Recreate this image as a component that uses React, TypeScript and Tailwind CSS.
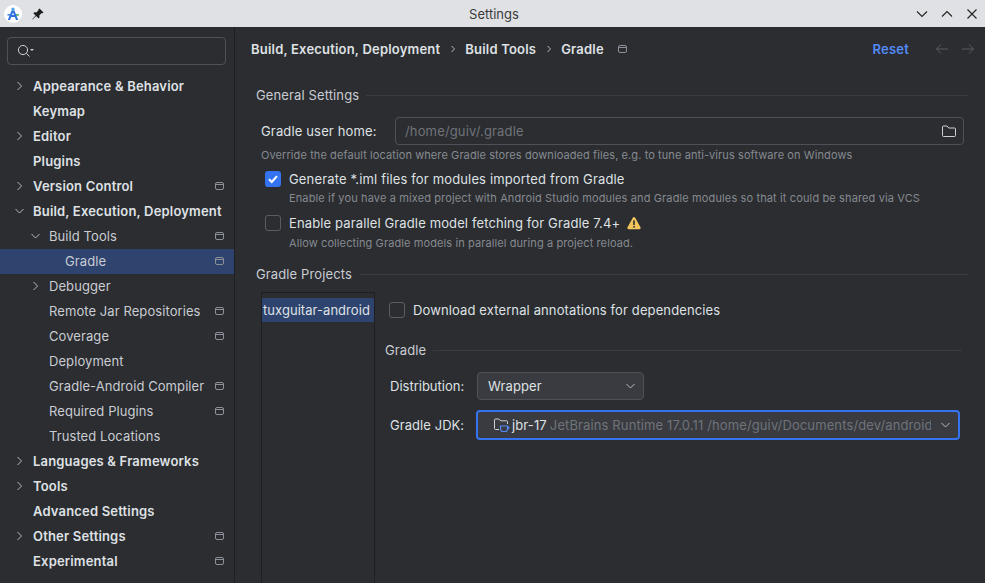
import React from "react";

const Chevron = ({ open = false }: { open?: boolean }) => (
  <svg width="10" height="10" viewBox="0 0 10 10" fill="none" stroke="#b4b8bf" strokeWidth="1" className="shrink-0">
    {open ? <path d="M1.5 3l4 4 4-4" /> : <path d="M3.5 1l4 4-4 4" />}
  </svg>
);

const ProjectIcon = () => (
  <svg width="10" height="10" viewBox="0 0 10 10" fill="none" stroke="#8c9098" strokeWidth="1" className="shrink-0">
    <rect x="1.5" y="1.5" width="8" height="7" rx="1.5" />
    <path d="M1.5 3.5h8" />
  </svg>
);

type Row = { label: string; depth: 0 | 1 | 2; arrow?: "open" | "closed"; icon?: boolean; bold?: boolean; selected?: boolean };

const rows: Row[] = [
  { label: "Appearance & Behavior", depth: 0, arrow: "closed", bold: true },
  { label: "Keymap", depth: 0, bold: true },
  { label: "Editor", depth: 0, arrow: "closed", bold: true },
  { label: "Plugins", depth: 0, bold: true },
  { label: "Version Control", depth: 0, arrow: "closed", bold: true, icon: true },
  { label: "Build, Execution, Deployment", depth: 0, arrow: "open", bold: true },
  { label: "Build Tools", depth: 1, arrow: "open", icon: true },
  { label: "Gradle", depth: 2, icon: true, selected: true },
  { label: "Debugger", depth: 1, arrow: "closed" },
  { label: "Remote Jar Repositories", depth: 1, icon: true },
  { label: "Coverage", depth: 1, icon: true },
  { label: "Deployment", depth: 1 },
  { label: "Gradle-Android Compiler", depth: 1, icon: true },
  { label: "Required Plugins", depth: 1, icon: true },
  { label: "Trusted Locations", depth: 1 },
  { label: "Languages & Frameworks", depth: 0, arrow: "closed", bold: true },
  { label: "Tools", depth: 0, arrow: "closed", bold: true },
  { label: "Advanced Settings", depth: 0, bold: true },
  { label: "Other Settings", depth: 0, arrow: "closed", bold: true, icon: true },
  { label: "Experimental", depth: 0, bold: true, icon: true },
];

const TreeRow = ({ r }: { r: Row }) => (
  <div className={`flex h-[25px] items-center pr-[10px] pb-[2px] ${r.selected ? "bg-[#2e436e]" : ""}`}>
    <div className={`flex shrink-0 items-center justify-end pr-[9px] ${r.depth === 0 ? "w-[33px]" : ""} ${r.depth === 1 ? "w-[49px]" : ""} ${r.depth === 2 ? "w-[65px]" : ""}`}>
      {r.arrow && <Chevron open={r.arrow === "open"} />}
    </div>
    <span className={`flex-1 whitespace-nowrap ${r.bold ? "font-semibold tracking-[0.18px] text-[#dfe1e5]" : "tracking-[0.08px] text-[#c9ccd3]"}`}>{r.label}</span>
    {r.icon && <ProjectIcon />}
  </div>
);

const Section = ({ title, className = "" }: { title: string; className?: string }) => (
  <div className={`flex items-center gap-[7px] ${className}`}>
    <span className="whitespace-nowrap tracking-[0.12px] text-[#c9ccd3]">{title}</span>
    <div className="h-px flex-1 bg-[#393b40]" />
  </div>
);

const Check = ({ on = false }: { on?: boolean }) =>
  on ? (
    <div className="flex size-4 shrink-0 items-center justify-center rounded-[3px] bg-[#3574f0]">
      <svg width="12" height="12" viewBox="0 0 12 12" fill="none" stroke="#ffffff" strokeWidth="2">
        <path d="M2 6.2l2.8 2.8L10 3.2" />
      </svg>
    </div>
  ) : (
    <div className="size-4 shrink-0 rounded-[3px] border border-[#5a5d63]" />
  );

export default function App() {
  return (
    <div className="flex h-[583px] w-[985px] flex-col overflow-hidden bg-[#2b2d30] font-['Inter',sans-serif] text-[13px] leading-[16px] text-[#dfe1e5]">
      <header className="flex h-[27px] shrink-0 items-center bg-[#dfe1e5] pl-1 pr-[7px]">
        <div className="flex flex-1 items-center">
          <div className="flex size-[18px] items-center justify-center rounded-full bg-white">
            <svg width="14" height="14" viewBox="0 0 14 14">
              <path d="M5.6 3.5L1.8 13h2.2l1.2-3h3.6l1.2 3h2.2L8.4 3.5zM6 8l1-2.6L8 8z" fill="#2f6fe0" />
              <rect x="5.4" y="0.5" width="3.2" height="3.4" rx="1.6" fill="#4aa3e8" />
              <rect x="1.5" y="7" width="2.6" height="1.6" fill="#3f86e6" />
              <rect x="10" y="7" width="2.8" height="1.8" fill="#58b368" />
            </svg>
          </div>
          <svg width="14" height="14" viewBox="0 0 14 14" className="ml-[9px]" fill="#1c1c1c">
            <path d="M8.5 1.5l4 4-1 .8-.8-.3-2.4 2.4.2 2-1 1-2.3-2.3L1.5 12.5l-.3-.3 3.4-3.6L2.3 6.3l1-1 2 .2L7.7 3l-.2-.8z" />
          </svg>
        </div>
        <div className="ml-[6px] text-[#3b3b3b]">Settings</div>
        <div className="flex flex-1 items-center justify-end gap-[13px]">
          <svg width="12" height="12" viewBox="0 0 12 12" fill="none" stroke="#222" strokeWidth="1.1"><path d="M1 3.5l5 5 5-5" /></svg>
          <svg width="12" height="12" viewBox="0 0 12 12" fill="none" stroke="#222" strokeWidth="1.1"><path d="M1 8.5l5-5 5 5" /></svg>
          <svg width="12" height="12" viewBox="0 0 12 12" fill="none" stroke="#222" strokeWidth="1.1"><path d="M1.5 1.5l9 9M10.5 1.5l-9 9" /></svg>
        </div>
      </header>

      <div className="flex min-h-0 flex-1">
        <aside className="w-[235px] shrink-0 border-r border-[#1e1f22]">
          <div className="mt-[10px] mr-[8px] mb-[9px] ml-[7px] flex h-[28px] items-center rounded-[4px] border border-[#4e5157] pl-[9px]">
            <svg width="18" height="14" viewBox="0 0 18 14" fill="none" stroke="#ced0d6" strokeWidth="1">
              <circle cx="6" cy="6" r="4.6" />
              <path d="M9.5 9.5l3 3" />
              <path d="M13 5h4l-2 2z" fill="#ced0d6" stroke="none" />
            </svg>
          </div>
          {rows.map((r) => (
            <TreeRow key={r.label} r={r} />
          ))}
        </aside>

        <main className="flex min-w-0 flex-1 flex-col">
          <div className="flex h-[44px] shrink-0 items-center pl-4 pr-[10px]">
            <div className="flex items-center font-semibold tracking-[0.2px] text-[#dfe1e5]">
              <span>Build, Execution, Deployment</span>
              <svg width="8" height="8" viewBox="0 0 8 8" fill="none" stroke="#b4b8bf" className="mr-[8px] ml-[9px]"><path d="M2.5 1l3 3-3 3" /></svg>
              <span>Build Tools</span>
              <svg width="8" height="8" viewBox="0 0 8 8" fill="none" stroke="#b4b8bf" className="mr-[8px] ml-[9px]"><path d="M2.5 1l3 3-3 3" /></svg>
              <span>Gradle</span>
              <div className="ml-[13px]"><ProjectIcon /></div>
            </div>
            <span className="ml-auto font-semibold tracking-[0.2px] text-[#548af7]">Reset</span>
            <svg width="14" height="12" viewBox="0 0 14 12" fill="none" stroke="#5a5d63" className="ml-[26px]"><path d="M13 6H1.5M6 1.5L1.5 6 6 10.5" /></svg>
            <svg width="14" height="12" viewBox="0 0 14 12" fill="none" stroke="#5a5d63" className="ml-3"><path d="M1 6h11.5M8 1.5L12.5 6 8 10.5" /></svg>
          </div>

          <div className="flex min-h-0 flex-1 flex-col pl-[21px] pr-[17px]">
            <Section title="General Settings" className="mt-[16px]" />

            <div className="mt-[14px] mr-[4px] flex items-center pl-[5px]">
              <span className="w-[134px] shrink-0 tracking-[0.15px] text-[#dfe1e5]">Gradle user home:</span>
              <div className="flex h-[28px] flex-1 items-center justify-between rounded-[4px] border border-[#4e5157] pl-[9px] pr-[6px] tracking-[0.15px] text-[#6f737a]">
                <span>/home/guiv/.gradle</span>
                <svg width="16" height="14" viewBox="0 0 16 14" fill="none" stroke="#ced0d6">
                  <path d="M1.5 11V3a1 1 0 011-1h3.6l1.6 2h5.8a1 1 0 011 1v6.5a1 1 0 01-1 1h-11a1 1 0 01-1-1z" />
                </svg>
              </div>
            </div>
            <p className="mt-[3px] pl-[5px] text-[11px] leading-[14px] tracking-[0.09px] whitespace-nowrap text-[#868a91]">
              Override the default location where Gradle stores downloaded files, e.g. to tune anti-virus software on Windows
            </p>

            <div className="mt-[9px] flex items-center gap-2 pl-[9px] tracking-[0.15px]">
              <Check on />
              <span>Generate *.iml files for modules imported from Gradle</span>
            </div>
            <p className="mt-[4px] pl-[33px] text-[11px] leading-[14px] tracking-[0.13px] whitespace-nowrap text-[#868a91]">
              Enable if you have a mixed project with Android Studio modules and Gradle modules so that it could be shared via VCS
            </p>
            <div className="mt-[10px] flex items-center gap-2 pl-[9px] tracking-[0.13px]">
              <Check />
              <span>Enable parallel Gradle model fetching for Gradle 7.4+</span>
              <svg width="14" height="14" viewBox="0 0 14 14" className="-ml-[1px]">
                <path d="M7 1a1.4 1.4 0 011.2.7l5.3 9.6a1.3 1.3 0 01-1.2 1.9H1.7a1.3 1.3 0 01-1.2-1.9l5.3-9.6A1.4 1.4 0 017 1z" fill="#f2c55c" />
                <rect x="6.2" y="4.4" width="1.6" height="4.6" fill="#2b2d30" />
                <rect x="6.2" y="10" width="1.6" height="1.6" fill="#2b2d30" />
              </svg>
            </div>
            <p className="mt-[5px] pl-[33px] text-[11px] leading-[14px] tracking-[0.1px] text-[#868a91]">
              Allow collecting Gradle models in parallel during a project reload.
            </p>

            <Section title="Gradle Projects" className="mt-[16px]" />

            <div className="mt-[10px] flex min-h-0 flex-1">
              <div className="-mb-px ml-[5px] w-[114px] shrink-0 border border-b-0 border-[#1e1f22] pt-[5px]">
                <div className="flex h-[24px] items-center overflow-hidden bg-[#2e436e] pl-px tracking-[0.05px] whitespace-nowrap text-[#dfe1e5]">tuxguitar-android</div>
              </div>
              <div className="min-w-0 flex-1 pl-[10px] pr-[6px] tracking-[0.12px]">
                <div className="mt-[10px] flex items-center gap-2 pl-[4px]">
                  <Check />
                  <span>Download external annotations for dependencies</span>
                </div>
                <Section title="Gradle" className="mt-[24px]" />
                <div className="mt-[14px] flex items-center pl-[5px]">
                  <span className="w-[87px] shrink-0 tracking-normal">Distribution:</span>
                  <div className="flex h-[28px] w-[167px] items-center justify-between rounded-[4px] border border-[#4e5157] bg-[#393b40] pl-[10px] pr-[8px]">
                    <span>Wrapper</span>
                    <Chevron open />
                  </div>
                </div>
                <div className="mt-[10px] flex items-center pl-[5px] pr-[2px]">
                  <span className="w-[86px] shrink-0 tracking-[0.06px]">Gradle JDK:</span>
                  <div className="flex h-[30px] min-w-0 flex-1 items-center rounded-[4px] border-2 border-[#3574f0] bg-[#393b40] pl-[15px] pr-[8px]">
                    <svg width="17" height="16" viewBox="0 0 17 16" fill="none" className="shrink-0">
                      <path d="M6 12.5H2.5a1 1 0 01-1-1V3a1 1 0 011-1h3.4l1.6 1.8h6a1 1 0 011 1V7" stroke="#ced0d6" />
                      <path d="M7.5 9h7v3a2.5 2.5 0 01-2.5 2.5H10A2.5 2.5 0 017.5 12z" stroke="#548af7" strokeWidth="1.2" />
                      <path d="M14.5 10h1.5v1.5h-1.5" stroke="#548af7" />
                    </svg>
                    <span className="ml-[2px] shrink-0">jbr-17</span>
                    <span className="ml-[3px] min-w-0 flex-1 overflow-hidden whitespace-nowrap text-[#6f737a]">JetBrains Runtime 17.0.11 /home/guiv/Documents/dev/android-studio/jbr</span>
                    <div className="ml-[9px]"><Chevron open /></div>
                  </div>
                </div>
              </div>
            </div>
          </div>
        </main>
      </div>
    </div>
  );
}
